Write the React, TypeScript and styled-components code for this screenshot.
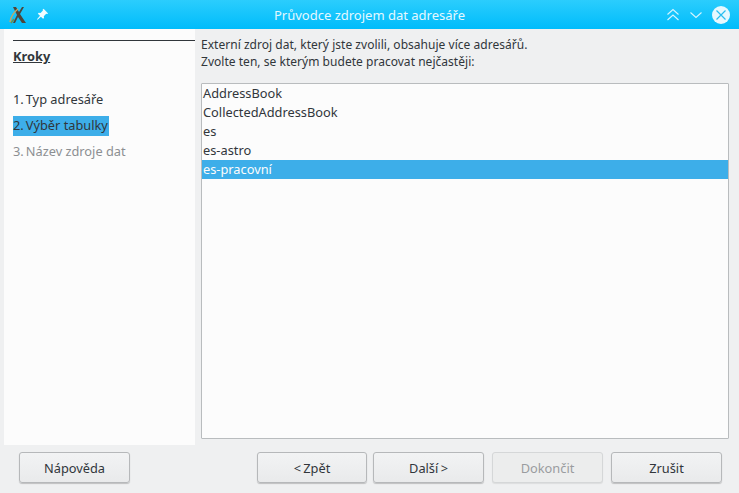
import React from 'react';
import styled, { createGlobalStyle } from 'styled-components';

const GlobalStyle = createGlobalStyle`
    html, body {
        margin: 0;
        padding: 0;
        background: #eff0f1;
    }
`;

const Window = styled.div`
    width: 739px;
    height: 493px;
    display: flex;
    flex-direction: column;
    overflow: hidden;
    background: #eff0f1;
    color: #31363b;
    font-family: "Noto Sans", sans-serif;
    font-size: 12.8px;
`;

const TitleBar = styled.header`
    height: 29px;
    flex: none;
    display: flex;
    align-items: center;
    padding: 0 7px 0 9px;
    background: linear-gradient(#2bcdfd, #00bcfb);
    color: #e4f8ff;
`;

const TitleIcons = styled.div`
    width: 64px;
    display: flex;
    align-items: center;
    gap: 9px;
`;

const Title = styled.div`
    flex: 1;
    text-align: center;
    font-size: 13px;
`;

const WindowControls = styled.div`
    display: flex;
    align-items: center;
    gap: 9px;
    padding-right: 2px;
`;

const Body = styled.main`
    height: 416px;
    flex: none;
    display: flex;
    padding-left: 4px;
`;

const Sidebar = styled.nav`
    width: 191px;
    flex: none;
    box-sizing: border-box;
    padding: 11px 0 0 9px;
    background: #fcfcfc;
`;

const SideHeading = styled.div`
    border-top: 1px solid #31363b;
    padding-top: 7px;
    height: 42px;
    font-weight: 700;
    line-height: 17px;
    text-decoration: underline;
`;

const StepList = styled.ol`
    list-style: none;
    margin: 0;
    padding: 0;
    display: flex;
    flex-direction: column;
    align-items: flex-start;
    gap: 6px;
`;

const Step = styled.li<{ $state: 'normal' | 'active' | 'disabled' }>`
    height: 20px;
    line-height: 18px;
    padding-right: 1px;
    white-space: pre;
    background: ${p => (p.$state === 'active' ? '#3daee9' : 'transparent')};
    color: ${p => (p.$state === 'disabled' ? '#8c8f92' : '#31363b')};
`;

const StepNumber = styled.span`
    margin-right: 2px;
`;

const Content = styled.section`
    flex: 1;
    min-width: 0;
    display: flex;
    flex-direction: column;
    padding: 7px 10px 6px 6px;
`;

const Intro = styled.p`
    margin: 0 0 12px;
    height: 35px;
    line-height: 17px;
    font-size: 12px;
    letter-spacing: 0.03px;
`;

const ListBox = styled.ul`
    flex: 1;
    list-style: none;
    margin: 0;
    padding: 0;
    background: #fcfcfc;
    border: 1px solid #b9bcbe;
    border-radius: 1px;
`;

const ListRow = styled.li<{ $selected?: boolean }>`
    height: 19px;
    line-height: 18px;
    padding-left: 1px;
    background: ${p => (p.$selected ? '#3daee9' : 'transparent')};
    color: ${p => (p.$selected ? '#fcfcfc' : '#31363b')};
`;

const Footer = styled.footer`
    flex: 1;
    display: flex;
    align-items: flex-start;
    padding: 7px 17px 0 19px;
`;

const ButtonGroup = styled.div`
    display: flex;
    margin-left: auto;
`;

const Button = styled.button<{ $gap?: number; $width?: number }>`
    width: ${p => p.$width ?? 111}px;
    height: 31px;
    padding: 0;
    margin-left: ${p => p.$gap ?? 0}px;
    box-sizing: border-box;
    border: 1px solid #b6b8ba;
    border-radius: 3px;
    background: linear-gradient(#f2f3f4, #e9eaeb);
    box-shadow: 0 1px 1px rgba(0, 0, 0, 0.2);
    color: #31363b;
    font-family: inherit;
    font-size: 12.8px;
    word-spacing: -1px;
    white-space: pre;
    &:disabled {
        border-color: #d5d7d8;
        background: #eceded;
        box-shadow: 0 1px 1px rgba(0, 0, 0, 0.08);
        color: #9a9c9f;
    }
`;

const AppLogo = () => (
    <svg width="18" height="18" viewBox="0 0 18 18">
        <path d="M4 1h3l3 5 3-5h2l-4 7 6 9h-4l-4-6-3 6H4l4-8z" fill="#4c463c" />
        <path d="M1 16C2 10 5 6 9 3" stroke="#c2a866" strokeWidth="1.500" fill="none" />
        <path d="M2 17l3-4" stroke="#6f8f4f" strokeWidth="1.500" />
    </svg>
);

const PinIcon = () => (
    <svg width="13" height="13" viewBox="0 0 12 12" fill="#f2fcff">
        <path d="M7 .8l4.200 4.200-1 .6-.8-.3-2.200 2.200.2 1.700-.9.800-2-2-3 2.800-.6-.5 2.800-3.100-2-2 .8-.9 1.700.2 2.200-2.200-.3-.8z" />
    </svg>
);

const ShadeIcon = () => (
    <svg width="14" height="14" viewBox="0 0 14 14" fill="none" stroke="#d5f5ff" strokeWidth="1.100">
        <path d="M1.500 6.500L7 1.500l5.500 5M1.500 12L7 7l5.500 5" />
    </svg>
);

const MinimizeIcon = () => (
    <svg width="14" height="14" viewBox="0 0 14 14" fill="none" stroke="#d5f5ff" strokeWidth="1.100">
        <path d="M1.500 4.500L7 9.500l5.500-5" />
    </svg>
);

const CloseIcon = () => (
    <svg width="18" height="18" viewBox="0 0 18 18">
        <circle cx="9" cy="9" r="9" fill="#e6f8fe" />
        <path d="M4.500 4.500l9 9M13.500 4.500l-9 9" stroke="#28bdf0" strokeWidth="1.200" />
    </svg>
);

const sources = ['AddressBook', 'CollectedAddressBook', 'es', 'es-astro', 'es-pracovní'];

export default function App() {
    return (
        <>
            <GlobalStyle />
            <Window>
                <TitleBar>
                    <TitleIcons>
                        <AppLogo />
                        <PinIcon />
                    </TitleIcons>
                    <Title>Průvodce zdrojem dat adresáře</Title>
                    <WindowControls>
                        <ShadeIcon />
                        <MinimizeIcon />
                        <CloseIcon />
                    </WindowControls>
                </TitleBar>
                <Body>
                    <Sidebar>
                        <SideHeading>Kroky</SideHeading>
                        <StepList>
                            <Step $state="normal"><StepNumber>1.</StepNumber>Typ adresáře</Step>
                            <Step $state="active"><StepNumber>2.</StepNumber>Výběr tabulky</Step>
                            <Step $state="disabled"><StepNumber>3.</StepNumber>Název zdroje dat</Step>
                        </StepList>
                    </Sidebar>
                    <Content>
                        <Intro>
                            Externí zdroj dat, který jste zvolili, obsahuje více adresářů.
                            <br />
                            Zvolte ten, se kterým budete pracovat nejčastěji:
                        </Intro>
                        <ListBox>
                            {sources.map(name => (
                                <ListRow key={name} $selected={name === 'es-pracovní'}>
                                    {name}
                                </ListRow>
                            ))}
                        </ListBox>
                    </Content>
                </Body>
                <Footer>
                    <Button>Nápověda</Button>
                    <ButtonGroup>
                        <Button $width={110}>&lt; Zpět</Button>
                        <Button $gap={6}>Další &gt;</Button>
                        <Button $gap={8} disabled>Dokončit</Button>
                        <Button $gap={8}>Zrušit</Button>
                    </ButtonGroup>
                </Footer>
            </Window>
        </>
    );
}
